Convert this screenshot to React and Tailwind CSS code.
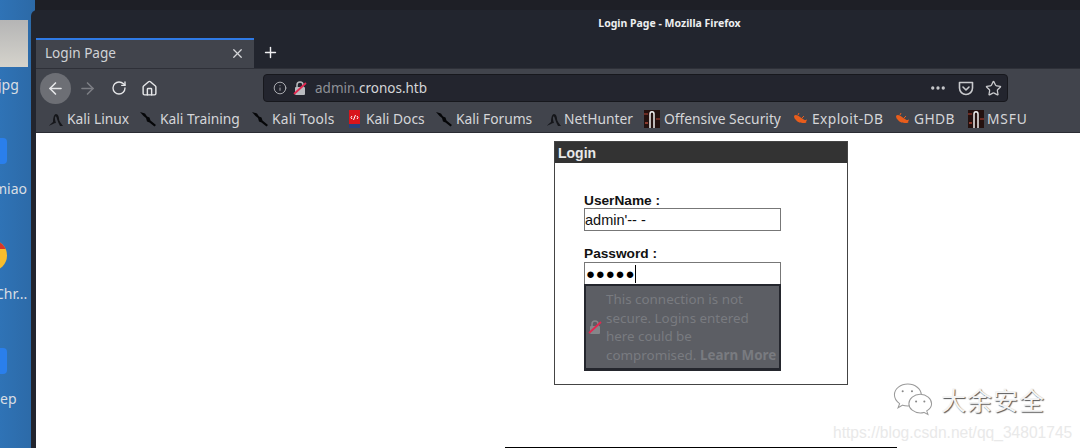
import React from 'react';
import { ArrowLeft, ArrowRight, RotateCw, Home, Info, MoreHorizontal, Star, X, Plus } from 'lucide-react';

const ui = "font-['Noto_Sans',sans-serif]";

const Dragon = () => (
    <svg width="16" height="18" viewBox="0 0 16 18" className="shrink-0">
        <path d="M1 16c1-2 3-3 4-4 0-4 1-8 3-8s3 3 3 5c0 2 2 4 4 7h-3c-1-2-2-4-3-7-.5-2-1-3-1.500-2.500C6.500 7 7 10 8 13c-2 0-5 2-7 3z" fill="#15161a" />
    </svg>
);

const Spear = () => (
    <svg width="17" height="18" viewBox="0 0 17 18" className="shrink-0">
        <path d="M0 2l5 1.500 2 3 2.500 1 1 3L16 15l-1.500 1.500-5-4-2.500-1L6 8 3.500 6z" fill="#050608" />
    </svg>
);

const Docs = () => (
    <svg width="15" height="18" viewBox="0 0 15 18" className="shrink-0">
        <rect x="1" y="0" width="11" height="18" fill="#d8141c" />
        <rect x="1" y="14" width="11" height="4" fill="#27407c" />
        <path d="M4 6L3 7.500 4 9M9 6l1 1.500L9 9M7.500 5L5.500 10" stroke="#fff" strokeWidth="1" fill="none" />
    </svg>
);

const Offsec = () => (
    <svg width="16" height="18" viewBox="0 0 16 18" className="shrink-0">
        <rect width="16" height="18" fill="#24110f" />
        <rect x="0" y="3" width="4" height="2" fill="#6b2a22" />
        <rect x="12" y="8" width="4" height="2" fill="#6b2a22" />
        <rect x="1" y="12" width="3" height="2" fill="#8a3a2e" />
        <path d="M6 18V4c0-3 4-3 4 0v14" stroke="#eee" strokeWidth="1.500" fill="none" />
    </svg>
);

const Bug = () => (
    <svg width="16" height="14" viewBox="0 0 16 14" className="shrink-0">
        <path d="M1 4c1-2 4-1 6 1l6 4c1 1 0 2-1 2-3 0-7 0-9-3C2 7 1 6 1 4z" fill="#e85d1c" />
        <path d="M5 3l1-2M9 6l2-2M11 9l3-1" stroke="#e85d1c" strokeWidth="1" />
    </svg>
);

const BrokenLock = ({ size = 14, body = '#b9bbbf' }) => (
    <svg width={size} height={size} viewBox="0 0 14 14" className="shrink-0">
        <path d="M4 6V4a3 3 0 0 1 6 0v2" stroke={body} strokeWidth="1.500" fill="none" />
        <rect x="2" y="6" width="10" height="8" rx="1" fill={body} />
        <path d="M1 13L13 2" stroke="#e22850" strokeWidth="1.800" />
    </svg>
);

const Pocket = () => (
    <svg width="16" height="15" viewBox="0 0 16 15" fill="none" stroke="#c9cacd" strokeWidth="1.600">
        <path d="M1.500 1.500h13v5.500a6.500 6.500 0 0 1-13 0z" strokeLinejoin="round" />
        <path d="M5 6l3 3 3-3" strokeLinecap="round" strokeLinejoin="round" />
    </svg>
);

const bookmarks = [
    { icon: <Dragon />, label: 'Kali Linux', cls: 'w-[92px] gap-[3px]', text: '' },
    { icon: <Spear />, label: 'Kali Training', cls: 'w-[112px] gap-[3px]', text: '' },
    { icon: <Spear />, label: 'Kali Tools', cls: 'w-[96px] gap-[3px]', text: 'tracking-[0.2px]' },
    { icon: <Docs />, label: 'Kali Docs', cls: 'w-[88px] gap-[3px]', text: '' },
    { icon: <Spear />, label: 'Kali Forums', cls: 'w-[110px] gap-[3px]', text: '' },
    { icon: <Dragon />, label: 'NetHunter', cls: 'w-[98px] gap-[2px]', text: '' },
    { icon: <Offsec />, label: 'Offensive Security', cls: 'w-[149px] gap-[4px]', text: '' },
    { icon: <Bug />, label: 'Exploit-DB', cls: 'w-[102px] gap-[3px]', text: 'tracking-[0.4px]' },
    { icon: <Bug />, label: 'GHDB', cls: 'w-[73px] gap-[3px]', text: 'tracking-[0.4px]' },
    { icon: <Offsec />, label: 'MSFU', cls: 'w-[60px] gap-[3px]', text: 'tracking-[0.8px]' },
];

const Desktop = () => (
    <div className="absolute left-0 top-0 h-[448px] w-[36px] bg-gradient-to-r from-[#2f73b6] to-[#2c69a6] overflow-hidden text-[#d9dee4] text-[14px] font-['Noto_Sans',sans-serif]">
        <div className="absolute left-0 top-[20px] w-[28px] h-[47px] bg-gradient-to-b from-[#b5b5b5] to-[#d5d3cc]"></div>
        <div className="absolute left-[-2px] top-[74px]">jpg</div>
        <div className="absolute left-0 top-[138px] w-[7px] h-[26px] bg-[#2a7fec] rounded-r-sm"></div>
        <div className="absolute left-[-6px] top-[178px]">miao</div>
        <div className="absolute left-[-14px] top-[240px] w-[21px] h-[31px] rounded-r-full bg-[#f9bd2c] overflow-hidden">
            <div className="h-[9px] bg-[#d8362a]"></div>
        </div>
        <div className="absolute left-[-5px] top-[283px]">Chr...</div>
        <div className="absolute left-0 top-[348px] w-[7px] h-[26px] bg-[#2a7fec] rounded-r-sm"></div>
        <div className="absolute left-0 top-[388px]">ep</div>
    </div>
);

export default function App() {
    return (
        <div className="relative w-[1080px] h-[448px] overflow-hidden bg-[#2f6fae]">
            <Desktop />
            <div className="absolute left-[35px] right-0 top-0 h-[12px] bg-[#1e1f26]"></div>

            {/* Firefox window */}
            <div className={`absolute left-[31px] top-[10px] w-[1049px] h-[438px] flex flex-col bg-[#22252e] rounded-tl-md ${ui}`}>
                <div className="h-[28px] flex items-start justify-center pt-[5px] pl-[228px] text-[10.500px] font-bold text-[#eceef0] leading-[16px]">
                    Login Page - Mozilla Firefox
                </div>

                <div className="flex-1 flex flex-col pl-[5px] min-h-0">
                    {/* Tabs */}
                    <div className="h-[30px] flex items-stretch">
                        <div className="w-[218px] bg-[#41444c] border-t-2 border-[#2f7ae5] flex items-center pl-[9px] pr-[9px] pb-[2px] justify-between">
                            <span className="text-[13.600px] text-[#d0d2d6]">Login Page</span>
                            <X size={15} color="#d5d6d9" strokeWidth={2} />
                        </div>
                        <div className="w-[32px] flex items-center justify-center pb-[2px]">
                            <Plus size={17} color="#f0f0f2" strokeWidth={2} />
                        </div>
                    </div>

                    {/* Nav bar */}
                    <div className="h-[36px] bg-[#41444c] border-t border-[#2e3038] flex items-center pl-[4px] pr-[72px] pt-[3px]">
                        <div className="w-[31px] h-[31px] rounded-full bg-[#6d6f75] flex items-center justify-center shrink-0">
                            <ArrowLeft size={19} color="#e6e7e9" strokeWidth={2} />
                        </div>
                        <div className="w-[32px] flex justify-center shrink-0">
                            <ArrowRight size={19} color="#7c7e84" strokeWidth={2} />
                        </div>
                        <div className="w-[31px] flex justify-center shrink-0">
                            <RotateCw size={16} color="#e6e7e9" strokeWidth={2} />
                        </div>
                        <div className="w-[31px] flex justify-center shrink-0">
                            <Home size={17} color="#e6e7e9" strokeWidth={2} />
                        </div>
                        <div className="ml-[98px] flex-1 h-[28px] bg-[#23252e] border border-[#17181d] rounded-[4px] flex items-center pl-[9px] pr-[5px]">
                            <Info size={14} color="#b5b6ba" strokeWidth={1.6} className="shrink-0" />
                            <span className="ml-[6px]"><BrokenLock /></span>
                            <span className="ml-[8px] pt-[1px] text-[13.500px] text-[#8f9197]">admin.<span className="text-[#d4d5d8]">cronos.htb</span></span>
                            <div className="ml-auto flex items-center gap-[11px]">
                                <MoreHorizontal size={18} color="#c9cacd" strokeWidth={2.4} />
                                <Pocket />
                                <Star size={17} color="#c9cacd" strokeWidth={1.8} />
                            </div>
                        </div>
                    </div>

                    {/* Bookmarks */}
                    <div className="h-[29px] bg-[#41444c] border-b border-[#2a2c33] flex items-center pl-[12px] pt-[2px]">
                        {bookmarks.map((b) => (
                            <div key={b.label} className={`flex items-center shrink-0 ${b.cls}`}>
                                {b.icon}
                                <span className={`text-[13.800px] text-[#d5d6d9] whitespace-nowrap ${b.text}`}>{b.label}</span>
                            </div>
                        ))}
                    </div>

                    {/* Page */}
                    <div className="relative flex-1 bg-white pt-[8px] pl-[518px] font-['Liberation_Sans',sans-serif]">
                        <div className="w-[294px] h-[244px] border border-[#444] bg-white">
                            <div className="h-[21px] bg-[#333333] pl-[3px] text-[14px] font-bold leading-[22px] text-[#e9e9e9]">Login</div>
                            <div className="pt-[30px] pl-[29px]">
                                <label className="block text-[13.700px] font-bold leading-[15px] text-[#111]">UserName :</label>
                                <div className="w-[197px] h-[23px] border border-[#777] text-[14.500px] leading-[22px] text-[#111] whitespace-pre">admin'-- -</div>
                                <label className="block mt-[15px] text-[13.700px] font-bold leading-[16px] text-[#111]">Password :</label>
                                <div className="w-[197px] h-[22px] border border-[#777] border-b-0 flex items-center pl-[1px]">
                                    <span className="text-[15px] tracking-[0.800px] text-black leading-none">●●●●●</span>
                                    <span className="w-px h-[18px] bg-black"></span>
                                </div>
                                <div className={`w-[197px] h-[87px] bg-[#5c5e64] border-2 border-[#24262d] border-b-[3px] flex items-center pl-[2px] ${ui}`}>
                                    <BrokenLock size={14} body="#85868a" />
                                    <p className="ml-[4px] text-[13.400px] leading-[18.500px] text-[#797b80] whitespace-nowrap">
                                        This connection is not<br />secure. Logins entered<br />here could be<br />compromised. <b className="font-bold">Learn More</b>
                                    </p>
                                </div>
                            </div>
                        </div>
                        <div className="absolute left-[469px] bottom-0 w-[392px] h-px bg-black"></div>

                        {/* Watermark */}
                        <div className="absolute left-[857px] top-[250px] flex items-center">
                            <svg width="40" height="33" viewBox="0 0 38 32" fill="white" stroke="#9a9a9a" strokeWidth="1">
                                <path d="M14 1C7 1 1 5.500 1 11.500c0 3.500 2 6.500 5 8.500l-1.500 4 4.500-2.500c1.500.5 3.500.7 5 .7 7 0 13-5 13-10.700S21 1 14 1z" />
                                <path d="M26 11c-6 0-11 4-11 9s5 9 11 9c1.300 0 2.500-.2 3.500-.5l4 2-1.200-3.500c2.800-1.700 4.700-4.200 4.700-7 0-5-5-9-11-9z" />
                                <circle cx="9" cy="8" r="1" fill="#888" stroke="none" />
                                <circle cx="18" cy="8" r="1" fill="#888" stroke="none" />
                                <circle cx="22" cy="18" r="1" fill="#888" stroke="none" />
                                <circle cx="30" cy="18" r="1" fill="#888" stroke="none" />
                            </svg>
                            <span className="ml-[8px] text-[25px] leading-none tracking-[1px] text-[#f4f4f4] font-['Noto_Sans_CJK_SC',sans-serif] [text-shadow:1px_1px_1px_#555]">大余安全</span>
                        </div>
                        <div className="absolute left-[797px] top-[288px] text-[15.600px] text-[#e9e9e9] whitespace-nowrap">https://blog.csdn.net/qq_34801745</div>
                    </div>
                </div>
            </div>
        </div>
    );
}
